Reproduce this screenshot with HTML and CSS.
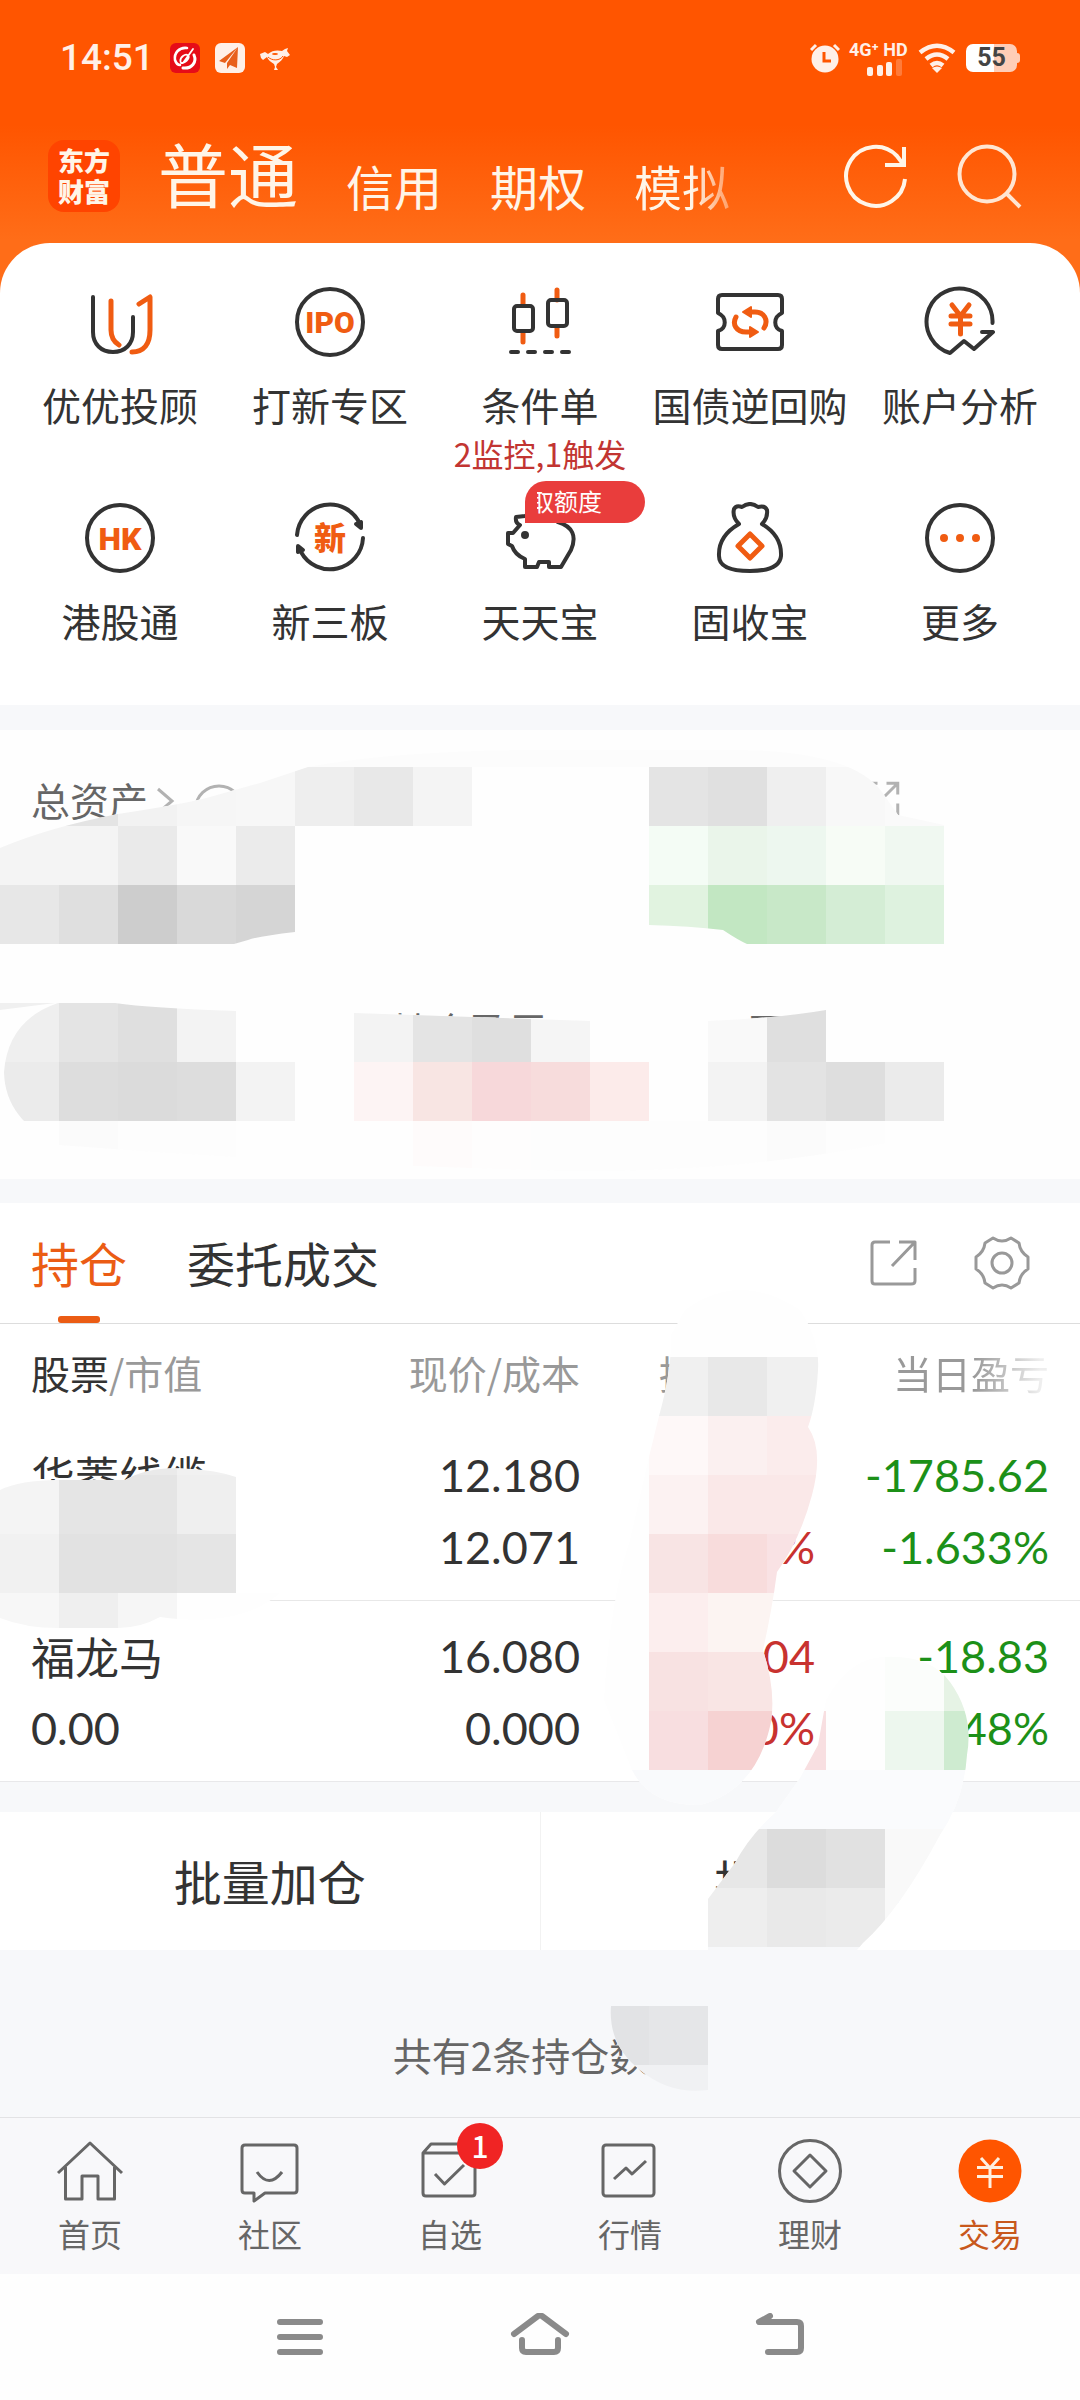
FILE: index.html
```html
<!DOCTYPE html>
<html lang="zh-CN">
<head>
    <meta charset="UTF-8">
    <meta name="viewport" content="width=device-width, initial-scale=1.0">
    <title>交易</title>
    <link rel="stylesheet" href="styles.css">
</head>
<body>
    <div class="top">
        <div class="statusbar">
            <span class="clock">14:51</span>
            <svg class="app" viewBox="0 0 30 30"><rect width="30" height="30" rx="6" fill="#e60c18"/><g fill="none" stroke="#fff" stroke-linecap="round"><path d="M17 5C9 4 4 10 5 17c1 3 3 5 5 5" stroke-width="2.6"/><path d="M24 12c3 7-2 14-11 13" stroke-width="3"/><path d="M23 6 13 20c-3 1-4-4 0-7s7 0 5 3-5 4-7 4" stroke-width="1.8"/></g></svg>
            <svg class="app" viewBox="0 0 30 30"><rect width="30" height="30" rx="6" fill="#fff0e8"/><path d="M23 4 4 18l6 2zM23 4 12 20v6l3-4 7 3z" fill="#e8601c"/></svg>
            <svg class="app" viewBox="0 0 30 30"><path d="M0 11 5 9 8 11C12 7 18 7 22 8L25 6 28 5 27 8 30 12 27 14 24 13C23 16 20 19 17 21L16 24 18 27H14L15 24 14 21C11 19 8 17 7 14L3 17 1 15z" fill="#fff0e8"/><path d="M8 14c4 4 12 4 15-1" fill="none" stroke="#ff5500"/><ellipse cx="15" cy="11" rx="3" ry="1" fill="#ff5500"/></svg>
            <span class="spacer"></span>
            <svg class="app" viewBox="0 0 30 30"><circle cx="15" cy="16" r="13.500" fill="#fff0e8"/><path d="M1 7l5-5M29 7l-5-5" stroke="#fff0e8" stroke-width="3"/><path d="M14 9v9h7" fill="none" stroke="#ff5500" stroke-width="3"/></svg>
            <div class="signal">
                <span>4G⁺ HD</span>
                <svg viewBox="0 0 36 17"><g fill="#fff0e8"><rect y="8" width="6" height="9" rx="2"/><rect x="10" y="6" width="6" height="11" rx="2"/><rect x="19" y="3" width="6" height="14" rx="2"/><rect x="29" width="6" height="17" rx="2" opacity=".25"/></g></svg>
            </div>
            <svg class="wifi" viewBox="0 0 38 30"><g fill="none" stroke="#fff0e8" stroke-width="4.500"><path d="M2 9.500Q19-4 36 9.500"/><path d="M8 16Q19 7 30 16"/><path d="M13 22.500q6-5 12 0"/></g><path d="M14 25q5-3 10 0l-5 5z" fill="#fff0e8"/></svg>
            <div class="battery">55</div>
        </div>
        <header>
            <div class="logo"><span>东方</span><span>财富</span></div>
            <nav class="accounts">
                <a class="current" href="#">普通</a>
                <a href="#">信用</a>
                <a href="#">期权</a>
                <a class="fade" href="#">模拟</a>
            </nav>
            <button class="iconbtn" aria-label="刷新"><svg viewBox="0 0 66 66"><path d="M62 36A29.500 29.500 0 1 1 54 13L60 21M61 4V22H42" fill="none" stroke="#fff5e8" stroke-width="4"/></svg></button>
            <button class="iconbtn" aria-label="搜索"><svg viewBox="0 0 66 66"><g fill="none" stroke="#ffe6d2" stroke-width="4"><circle cx="30" cy="31" r="27.500"/><path d="M49 50 63 64"/></g></svg></button>
        </header>
        <div class="shortcuts">
            <a href="#"><svg viewBox="0 0 72 72"><path d="M9 11V46C9 58 17 66 29 66S49 58 49 46V31"/><path class="o" d="M27 15V44Q27 54 35 59M55 18 66 11V44C66 58 60 66 48 66"/></svg><span>优优投顾</span></a>
            <a href="#"><svg viewBox="0 0 72 72"><circle cx="36" cy="36" r="33"/><text x="36" y="47" font-size="30">IPO</text></svg><span>打新专区</span></a>
            <a href="#"><svg viewBox="0 0 72 72"><path class="o" d="M19 9V19M19 46V56M53 4V14M53 41V50"/><rect x="10" y="20" width="19" height="25" rx="3"/><rect x="44" y="14" width="19" height="26" rx="3"/><path d="M7 66h7M24 66h7M41 66h7M58 66h7"/></svg><span>条件单</span><em>2监控,1触发</em></a>
            <a href="#"><svg viewBox="0 0 72 72"><path d="M8 9H64q4 0 4 4V27C59 31 59 42 68 45V59q0 4-4 4H8q-4 0-4-4V45C13 42 13 31 4 27V13q0-4 4-4z"/><path class="o" d="M22 31C18 38 22 46 32 46H38M50 42C55 34 50 26 41 26H36"/><path class="of" d="M37 21V31L29 26zM36 41V51L44 46z"/></svg><span>国债逆回购</span></a>
            <a href="#"><svg viewBox="0 0 72 72"><path d="M68.500 37A33 33 0 1 0 26 67L40 55 50 63 69 46H58"/><path class="o" d="M28 19 36.500 30 45 19M36.500 30V48M27 30H46M27 38H46"/></svg><span>账户分析</span></a>
            <a href="#"><svg viewBox="0 0 72 72"><circle cx="36" cy="36" r="33"/><text x="36" y="48" font-size="32">HK</text></svg><span>港股通</span></a>
            <a href="#"><svg viewBox="0 0 72 72"><path d="M3 33A33 33 0 0 1 66 22M69 36A33 33 0 0 1 7 50"/><path class="kf" d="M62 22 67 20 67 26zM4 50V44L9 48z"/><text x="36" y="48" font-size="32">新</text></svg><span>新三板</span></a>
            <a href="#"><svg viewBox="0 0 72 72"><path d="M21 14 12 15Q11 21 16 23L9 31H4V42L8 44Q11 53 21 57V65H33L35 60H45V65H57L67 48Q76 27 54 20 38 9 21 14z"/><circle class="kf" cx="21" cy="33" r="2"/></svg><span>天天宝</span><b class="badge"><i>取额度</i></b></a>
            <a href="#"><svg viewBox="0 0 72 72"><path d="M25 22Q18 15 20 7 22 3 28 5 36-1 44 5 51 3 53 8 54 16 48 22 68 34 67 54C66 64 56 69 36 69S5 64 5 54Q4 34 25 22z"/><path class="o" d="M36 32 48 44 36 56 24 44z"/></svg><span>固收宝</span></a>
            <a href="#"><svg viewBox="0 0 72 72"><circle cx="36" cy="36" r="33"/><g class="of"><circle cx="20" cy="36" r="3"/><circle cx="36" cy="36" r="3"/><circle cx="52" cy="36" r="3"/></g></svg><span>更多</span></a>
        </div>
    </div>

    <section class="assets">
        <div class="total">
            <span>总资产</span>
            <svg viewBox="0 0 80 48"><path d="M10 14 24 26 10 38"/><ellipse cx="71" cy="33" rx="23" ry="22"/></svg>
            <svg class="share" viewBox="0 0 48 48"><path d="M18 3H3V45H45V30M30 3H45V18M45 3 22 26"/></svg>
        </div>
        <div class="figures">
            <span></span>
            <span>持仓盈亏</span>
            <span>可用</span>
        </div>
    </section>

    <section class="positions">
        <div class="tabs">
            <button class="active">持仓</button>
            <button>委托成交</button>
            <span class="spacer"></span>
            <button class="tool" aria-label="分享"><svg viewBox="0 0 56 56"><path d="M24 7H9Q6 7 6 10V46Q6 49 9 49H45Q49 49 49 46V33M33 7H49V25M49 7 26 31"/></svg></button>
            <button class="tool" aria-label="设置"><svg viewBox="0 0 56 56"><circle cx="28" cy="28" r="10"/><path d="M19 3Q28 9 37 3L45 8Q46 17 54 22V34Q46 39 45 48L37 53Q28 47 19 53L11 48Q10 39 2 34V22Q10 17 11 8z"/></svg></button>
        </div>
        <table>
            <thead>
                <tr>
                    <th><b>股票</b>/市值</th>
                    <th>现价/成本</th>
                    <th>持仓盈亏</th>
                    <th class="cut">当日盈亏</th>
                </tr>
            </thead>
            <tbody>
                <tr>
                    <td class="name">华菱线缆</td>
                    <td>12.180<br>12.071</td>
                    <td class="up"><br>%</td>
                    <td class="down">-1785.62<br>-1.633%</td>
                </tr>
                <tr>
                    <td class="name">福龙马<span>0.00</span></td>
                    <td>16.080<br>0.000</td>
                    <td class="up">04<br>0%</td>
                    <td class="down">-18.83<br>48%</td>
                </tr>
            </tbody>
        </table>
    </section>

    <div class="batch">
        <button>批量加仓</button>
        <button>批量减仓</button>
    </div>
    <p class="summary">共有2条持仓数据</p>

    <nav class="tabbar">
        <a href="#"><svg viewBox="0 0 72 72"><path d="M4 38 36 8 68 38M11.500 32V64H28V41H44V64H60.500V32"/></svg>首页</a>
        <a href="#"><svg viewBox="0 0 72 72"><path d="M11 10H60Q63 10 63 13V55Q63 58 60 58H31L20 66V58H11Q8 58 8 55V13Q8 10 11 10zM23 37Q35 54 48 37"/></svg>社区</a>
        <a href="#"><svg viewBox="0 0 72 72"><path d="M9 18H61V58Q61 61 58 61H12Q9 61 9 58V18L17 9H53L61 18M21 39 30.500 49 50 30"/></svg>自选<b class="count">1</b></a>
        <a href="#"><svg viewBox="0 0 72 72"><rect x="9" y="10" width="51" height="51" rx="3"/><path d="M20 44 32 33 38 39 52 26"/></svg>行情</a>
        <a href="#"><svg viewBox="0 0 72 72"><circle cx="36" cy="36" r="30.500"/><path d="M36 20 52 36 36 52 20 36z"/></svg>理财</a>
        <a class="active" href="#"><svg viewBox="0 0 72 72"><circle cx="36" cy="36" r="31.500"/><path d="M27 23 36 33 45 23M36 33V53M23 32.500H49M23 41.500H49"/></svg>交易</a>
    </nav>
    <div class="sysnav">
        <button aria-label="菜单"><svg viewBox="0 0 60 48"><path d="M10 9H50M10 24H50M10 39H50"/></svg></button>
        <button aria-label="主页"><svg viewBox="0 0 60 48"><path d="M4 21 28 3Q30 2 32 3L56 21M12 27V35Q12 39 16 39H44Q48 39 48 35V27"/></svg></button>
        <button aria-label="返回"><svg viewBox="0 0 60 48"><path d="M20 3 9 9H47Q51 9 51 13V35Q51 39 47 39H18"/></svg></button>
    </div>

    <!-- mosaic over the private amounts, 59px cells -->
    <svg class="mosaic" viewBox="0 0 1080 2400">
        <defs>
            <clipPath id="blob1"><path d="M0 848Q50 827 118 814 190 803 210 797L260 783 308 767Q400 750 540 750H720Q850 748 882 792L898 815 944 825V944H747Q738 940 723 930 690 926 649 925V885H295V932Q260 936 248 940L234 944H0z"/></clipPath>
            <clipPath id="blob2"><path d="M58 1003H115Q150 1008 236 1011L354 1013 531 1019 590 1021H708Q780 1018 826 1010L950 1003V1128Q850 1155 720 1166 600 1174 540 1170 300 1164 59 1145 5 1120 4 1072 8 1020 58 1003z"/></clipPath>
            <clipPath id="blob3"><path d="M0 1490Q20 1480 59 1480H125Q150 1465 190 1469 215 1470 236 1477V1593H280Q240 1628 160 1617 140 1628 118 1628H59Q25 1628 0 1618z"/></clipPath>
            <clipPath id="blob4"><path d="M685 1310Q740 1270 800 1310 820 1340 818 1370 816 1405 808 1427 824 1450 812 1495 800 1540 777 1572 772 1610 763 1650 776 1690 771 1722 757 1790 700 1805 650 1806 632 1770L604 1700Q610 1600 630 1540L649 1457 659 1416Q672 1370 671 1335z"/></clipPath>
            <clipPath id="blob5"><path d="M826 1700Q850 1657 885 1657 930 1655 950 1682 974 1715 967 1755 964 1800 940 1835 900 1910 863 1943L857 1950H708V1899L735 1863Q750 1835 776 1812L800 1778 818 1745z"/></clipPath>
            <clipPath id="blob6"><path d="M611 2006H708V2090Q670 2095 640 2070 608 2045 611 2006z"/></clipPath>
        </defs>
        <g id="mosaic"></g>
    </svg>
    <script>
        const cell = 59;
        // clip, base colour, then rows: [row, first column, colours...]
        const blobs = [
            ["blob1", "#fefefe",
                [12, 5, "#fcfcfc", "#fcfcfc", "#fcfcfc", "#fcfcfc", "#fcfcfc", "#fcfcfc", "#fcfcfc", "#fcfcfc", "#fcfcfc", "#fcfcfc"],
                [13, 0, "#f4f4f4", "#e4e4e4", "#f2f2f2", "#f6f6f6", "#f7f7f7", "#eeeeee", "#e8e8e8", "#f4f4f4"],
                [13, 11, "#e4e4e4", "#e0e0e0", "#efefef", "#f8f8f8", "#fafafa"],
                [14, 0, "#f4f4f4", "#f4f4f4", "#eaeaea", "#f9f9f9", "#ebebeb"],
                [14, 11, "#f4fcf5", "#eaf5ea", "#edf7ef", "#f7fcf6", "#f0f8f1"],
                [15, 0, "#e7e7e7", "#dfdfdf", "#cdcdcd", "#d9d9d9", "#d5d5d5"],
                [15, 11, "#e1f3e0", "#c2e7c2", "#c8e8c8", "#d4edd5", "#def2df"]],
            ["blob2", "#fefefe",
                [17, 0, "#efefef", "#e4e4e4", "#dfdfdf", "#f3f3f3"],
                [17, 6, "#f3f3f3", "#e4e4e4", "#dfdfdf", "#f5f5f5"],
                [17, 12, "#f9f9f9", "#dfdfdf"],
                [18, 0, "#ebebeb", "#dddddd", "#dbdbdb", "#dddddd", "#f3f3f3"],
                [18, 6, "#fdf4f4", "#f8e5e3", "#f7d8da", "#f7dcdc", "#fcebea"],
                [18, 12, "#f3f3f3", "#e3e3e3", "#dedede", "#ebebeb"],
                [19, 1, "#fbfbfb", "#fdfdfd", "#fdfdfd", "#fefefe", "#fefefe", "#fefefe", "#fefbfb", "#fefdfd", "#fdfdfd", "#fdfdfd", "#fdfdfd", "#fdfdfd", "#fbfbfb", "#fdfdfd"]],
            ["blob3", "#fefefe",
                [24, 0, "#f4f4f4", "#eaeaea", "#eaeaea", "#f1f1f1"],
                [25, 0, "#f4f4f4", "#e5e5e5", "#e5e5e5", "#efefef"],
                [26, 0, "#f1f1f1", "#e2e2e2", "#e2e2e2", "#e5e5e5"],
                [27, 0, "#f7f7f7", "#efefef", "#f6f6f6"]],
            ["blob4", "#fefefe",
                [23, 11, "#f0f0f0", "#e8e8e8", "#f0f0f0"],
                [24, 11, "#fef8f8", "#fbf0f0", "#fbecec"],
                [25, 11, "#fcf2f2", "#fae8e8", "#fae8e8"],
                [26, 11, "#f8e4e4", "#f8dcdc", "#f9e2e4"],
                [27, 11, "#fceeee", "#fcf4f2", "#fcf4f2"],
                [28, 11, "#f8e2e2", "#f9e5e4", "#f9e5e4"],
                [29, 11, "#f8dee0", "#f6d2d2", "#f6d2d2"],
                [30, 10, "#f9fafc", "#f9fafc", "#f9fafc", "#f9fafc"]],
            ["blob5", "#fefefe",
                [28, 15, "#fbfdfb", "#e6f3e5"],
                [29, 13, "#f8dfe1", "#fefefe", "#edf7ee", "#ceebd0"],
                [30, 12, "#fafbfd", "#fafbfd", "#fafbfd", "#fafbfd", "#fafbfd"],
                [31, 12, "#e7e7e7", "#dcdcdc", "#e1e1e1", "#f9f9f9"],
                [32, 12, "#eeeeee", "#e9e9e9", "#ebebeb", "#f9f9f9"],
                [33, 12, "#f7f8fa", "#f7f8fa", "#f7f8fa"]],
            ["blob6", "#f7f8fa",
                [34, 10, "#e2e3e5", "#e5e6e8"],
                [35, 10, "#f0f1f3", "#f0f1f3"]]
        ];

        let html = "";
        blobs.forEach(([clip, base, ...rows]) => {
            html += `<g clip-path="url(#${clip})"><rect width="1080" height="2400" fill="${base}"/>`;
            rows.forEach(([row, col, ...colors]) => {
                colors.forEach((color, i) => {
                    html += `<rect x="${(col + i) * cell}" y="${row * cell}" width="${cell}" height="${cell}" fill="${color}"/>`;
                });
            });
            html += "</g>";
        });
        html += '<path d="M0 1003H55L0 1010z" fill="#f0f0f0"/>';
        document.getElementById("mosaic").innerHTML = html;
    </script>
</body>
</html>
```
FILE: styles.css
```css
* {
    box-sizing: border-box;
}
body {
    margin: 0;
    position: relative;
    font-family: "Noto Sans CJK SC", sans-serif;
    font-size: 39px;
    color: #333;
    background-color: #f7f8fa;
}
a {
    color: inherit;
    text-decoration: none;
}
button {
    border: 0;
    padding: 0;
    background: none;
    font: inherit;
    color: inherit;
}
svg {
    display: block;
}
.spacer {
    flex: 1;
}
.top {
    background: linear-gradient(#ff5500 125px, #ff6d18 240px);
}

/* status bar */
.statusbar {
    display: flex;
    align-items: center;
    height: 116px;
    padding: 0 60px;
    color: #fff0e8;
}
.clock {
    margin-right: 16px;
    font: 500 37px/40px Roboto, sans-serif;
}
.app {
    width: 30px;
    height: 30px;
    margin-right: 15px;
}
.signal {
    width: 56px;
    margin-right: 13px;
    font: 700 18px/18px Roboto, sans-serif;
    white-space: nowrap;
}
.signal svg {
    width: 36px;
    height: 17px;
    margin-left: 18px;
}
.statusbar .spacer + .app {
    margin-right: 9px;
}
.wifi {
    width: 38px;
    height: 30px;
    margin-right: 10px;
}
.battery {
    position: relative;
    width: 51px;
    height: 28px;
    margin-right: 3px;
    border-radius: 7px;
    background: linear-gradient(90deg, #fff 55%, #ffcdb6 55%);
    color: #444;
    font: 700 25px/28px Roboto, sans-serif;
    text-align: center;
}
.battery::after {
    content: "";
    position: absolute;
    top: 9px;
    right: -3px;
    width: 3px;
    height: 10px;
    border-radius: 0 3px 3px 0;
    background-color: #ffcdb6;
}

/* header */
header {
    display: flex;
    align-items: center;
    height: 127px;
    padding: 0 57px 8px 48px;
}
.logo {
    display: flex;
    flex-direction: column;
    width: 72px;
    height: 72px;
    padding-top: 4px;
    border-radius: 16px;
    background-color: #ff4400;
    color: #fff5e8;
    font-weight: 900;
    font-size: 26px;
    line-height: 31px;
    text-align: center;
}
.accounts {
    display: flex;
    flex: 1;
    align-items: center;
    gap: 48px;
    margin-left: 38px;
    padding-bottom: 5px;
    font-size: 48px;
    line-height: 72px;
    color: #fff5e8;
}
.accounts a {
    padding-top: 24px;
}
.accounts .current {
    padding-top: 0;
    font-size: 70px;
}
.accounts .fade {
    color: transparent;
    background: linear-gradient(90deg, #fff5e8 60%, rgba(255, 245, 232, 0.4));
    background-clip: text;
    -webkit-background-clip: text;
}
.iconbtn {
    width: 66px;
    height: 66px;
    margin-left: 48px;
}

/* shortcuts */
.shortcuts {
    display: grid;
    grid-template-columns: repeat(5, 1fr);
    grid-auto-rows: 216px;
    padding: 43px 15px 0;
    height: 462px;
    border-radius: 50px 50px 0 0;
    background-color: #fff;
}
.shortcuts a {
    position: relative;
    display: flex;
    flex-direction: column;
    align-items: center;
    white-space: nowrap;
}
.shortcuts svg {
    width: 72px;
    height: 72px;
    margin-bottom: 18px;
    fill: none;
    stroke: #333;
    stroke-width: 4;
    stroke-linecap: round;
    stroke-linejoin: round;
}
.shortcuts .o {
    stroke: #f05c12;
    stroke-width: 5;
}
.shortcuts .of {
    fill: #f05c12;
    stroke: #f05c12;
    stroke-width: 2;
}
.shortcuts .kf {
    fill: #333;
}
.shortcuts text {
    fill: #f05c12;
    stroke: none;
    font-weight: 900;
    font-family: Roboto, "Noto Sans CJK SC", sans-serif;
    text-anchor: middle;
}
.shortcuts span {
    line-height: 56px;
}
.shortcuts em {
    color: #c23532;
    font-style: normal;
    font-size: 32px;
    line-height: 42px;
}
.badge {
    position: absolute;
    top: -21px;
    left: 90px;
    width: 120px;
    height: 42px;
    padding: 0 12px;
    border-radius: 21px 21px 21px 0;
    background-color: #e93d3c;
    color: #fff;
    font-size: 24px;
    font-weight: 400;
    line-height: 40px;
}
.badge i {
    display: flex;
    justify-content: flex-end;
    width: 65px;
    overflow: hidden;
    font-style: normal;
}

/* assets */
.assets {
    height: 449px;
    margin-top: 25px;
    padding: 41px 31px 0;
    background-color: #fefefe;
    color: #666;
}
.total {
    display: flex;
    align-items: center;
    line-height: 56px;
}
.total svg {
    width: 80px;
    height: 48px;
    fill: none;
    stroke: #b2b2b2;
    stroke-width: 3;
    overflow: visible;
}
.total .share {
    width: 36px;
    height: 36px;
    margin-left: auto;
    margin-right: 149px;
    stroke-width: 4;
}
.figures {
    display: grid;
    grid-template-columns: 361px 357px 1fr;
    margin-top: 174px;
    line-height: 56px;
}

/* positions */
.positions {
    margin-top: 24px;
    border-bottom: 1px solid #e8e8ea;
    background-color: #fff;
}
.tabs {
    display: flex;
    align-items: center;
    gap: 60px;
    height: 121px;
    padding: 0 50px 0 31px;
    border-bottom: 1px solid #ddd;
    font-size: 48px;
}
.tabs button {
    position: relative;
    height: 120px;
    padding-bottom: 3px;
}
.tabs .active {
    color: #eb5c14;
}
.tabs .active::after {
    content: "";
    position: absolute;
    bottom: 0;
    left: 50%;
    width: 42px;
    height: 7px;
    margin-left: -21px;
    border-radius: 3px;
    background-color: #eb5c14;
}
.tabs .tool {
    width: 56px;
    margin-left: -8px;
    padding: 0;
}
.tabs svg {
    fill: none;
    stroke: #999;
    stroke-width: 3;
    stroke-linejoin: round;
}
table {
    width: 100%;
    border-collapse: collapse;
    table-layout: fixed;
}
th, td {
    padding: 0;
    text-align: right;
    white-space: nowrap;
}
th {
    width: 250px;
    height: 96px;
    color: #999;
    font-weight: 400;
}
th b {
    color: #333;
    font-weight: 400;
}
th:first-child, td:first-child {
    width: auto;
    padding-left: 31px;
    text-align: left;
}
th:nth-child(3) {
    width: 235px;
}
th:last-child, td:last-child {
    width: 265px;
    padding-right: 31px;
}
td {
    padding: 19px 0 17px;
    vertical-align: top;
    font: 45px/72px Lato, sans-serif;
}
tbody tr + tr td {
    border-top: 1px solid #e8e8e8;
}
.name {
    font: 44px/72px "Noto Sans CJK SC", sans-serif;
}
.name span {
    display: block;
    font: 45px/72px Lato, sans-serif;
}
.up {
    color: #c8322f;
}
.down {
    color: #1c9018;
}
.cut {
    color: transparent;
    background: linear-gradient(90deg, #999 60%, #eee 85%);
    background-clip: text;
    -webkit-background-clip: text;
}

/* batch actions */
.batch {
    display: flex;
    margin-top: 30px;
    background-color: #fff;
}
.batch button {
    flex: 1;
    height: 138px;
    padding-bottom: 3px;
    font-size: 48px;
}
.batch button + button {
    border-left: 1px solid #f2f2f2;
}
.summary {
    margin: 0;
    padding: 76px 0 35px;
    color: #666;
    line-height: 56px;
    text-align: center;
}

/* bottom bar */
.tabbar {
    display: flex;
    height: 157px;
    padding-top: 17px;
    border-top: 1px solid #e3e3e5;
    background-color: #f8f8fa;
}
.tabbar a {
    position: relative;
    display: flex;
    flex: 1;
    flex-direction: column;
    align-items: center;
    gap: 4px;
    color: #666;
    font-size: 32px;
    line-height: 44px;
}
.tabbar svg {
    width: 72px;
    height: 72px;
    fill: none;
    stroke: #666;
    stroke-width: 3;
    stroke-linejoin: round;
}
.tabbar .active {
    color: #c8581c;
}
.tabbar .active svg {
    stroke: #fff0e0;
}
.tabbar .active circle {
    fill: #ff5500;
    stroke: none;
}
.count {
    position: absolute;
    top: -12px;
    left: 50%;
    width: 46px;
    height: 46px;
    margin-left: 7px;
    border-radius: 50%;
    background-color: #f02424;
    color: #fff;
    font-size: 30px;
    font-weight: 500;
    line-height: 44px;
    text-align: center;
}
.sysnav {
    display: flex;
    justify-content: center;
    gap: 180px;
    height: 126px;
    background-color: #fefefe;
}
.sysnav svg {
    width: 60px;
    height: 48px;
    fill: none;
    stroke: #8a8a8a;
    stroke-width: 6;
    stroke-linecap: round;
    stroke-linejoin: round;
}

.mosaic {
    position: absolute;
    top: 0;
    left: 0;
    width: 100%;
    pointer-events: none;
}
```
